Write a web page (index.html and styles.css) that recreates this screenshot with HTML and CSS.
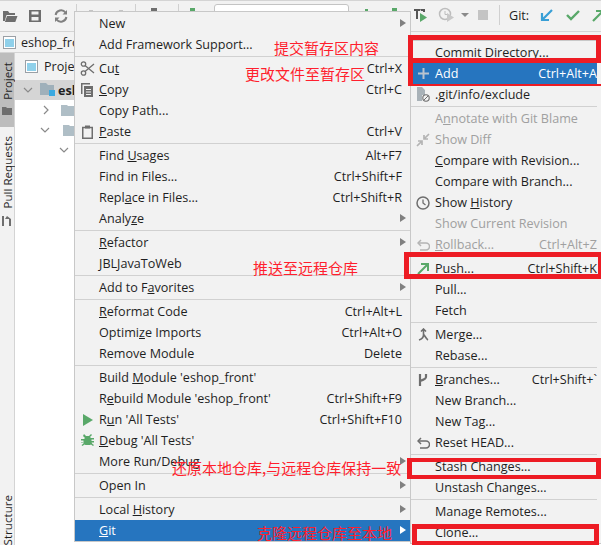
FILE: index.html
```html
<!DOCTYPE html>
<html lang="en">
<head>
<meta charset="utf-8">
<title>Git context menu</title>
<link rel="stylesheet" href="styles.css">
</head>
<body>
<div class="app">
  <div class="toolbar">
    <svg class="tb-icon" width="16" height="16" viewBox="0 0 16 16"><path d="M1 3h5l1.500 2H13v2H4.500L2.800 13H1zM5 8h10.500l-2.200 6H2.900z" fill="#6e6e6e"/></svg>
    <svg class="tb-icon" width="14" height="14" viewBox="0 0 14 14"><path d="M1 1h12v12H1z M3.500 2.500v3h7v-3z M3.500 8v3.500h7V8z" fill="#6e6e6e" fill-rule="evenodd"/></svg>
    <svg class="tb-icon tb-refresh" width="14" height="14" viewBox="0 0 14 14"><path d="M11.500 3.500A5.600 5.600 0 0 0 1.600 6M2.500 10.500A5.600 5.600 0 0 0 12.400 8" fill="none" stroke="#808080" stroke-width="2"/><path d="M8.500 5.500H13V1zM5.500 8.500H1V13z" fill="#808080"/></svg>
    <span class="tb-sep tb-sep-a"></span>
    <span class="tb-sep tb-sep-b"></span>
    <span class="tb-sep tb-sep-c"></span>
    <span class="tb-dot tb-dot-a"></span>
    <span class="tb-dot tb-dot-b"></span>
    <span class="tb-dot tb-dot-c"></span>
    <span class="tb-dot tb-dot-d"></span>
    <span class="tb-dot tb-dot-e"></span>
    <span class="tb-dot tb-dot-f"></span>
    <span class="tb-combo"></span>
  </div>
  <div class="crumb">
    <svg width="13" height="13" viewBox="0 0 13 13"><rect x=".5" y=".5" width="12" height="12" fill="#fff" stroke="#9aa0a6"/><rect x="2" y="3" width="9" height="8" fill="#8fd0ea"/></svg>
    <span>eshop_front</span>
  </div>
  <div class="workspace">
    <div class="strip">
      <div class="strip-active">
        <span class="vtext">Project</span>
        <svg class="strip-folder" width="10" height="8" viewBox="0 0 10 8"><path d="M0 0h4l1 1h5v7H0z" fill="#6e6e6e"/></svg>
      </div>
      <span class="vtext vtext-pr">Pull Requests</span>
      <svg class="strip-pr" width="10" height="10" viewBox="0 0 10 10"><path d="M0 0h2v10H0zM7 3v7h2V3zM5 0 3 3h6z" fill="#6e6e6e"/></svg>
      <span class="strip-fill"></span>
      <span class="vtext vtext-st">Structure</span>
    </div>
    <div class="pane">
      <div class="pane-head">
        <svg width="13" height="13" viewBox="0 0 13 13"><rect x=".5" y=".5" width="12" height="12" fill="#fff" stroke="#9aa0a6"/><rect x="2" y="3" width="9" height="8" fill="#8fd0ea"/></svg>
        <span>Project</span>
      </div>
      <div class="tree-row tree-sel">
        <svg class="chev" width="10" height="6" viewBox="0 0 10 6"><path d="M1 1l4 4 4-4" fill="none" stroke="#8a8a8a" stroke-width="1.200"/></svg>
        <svg class="mod" width="16" height="14" viewBox="0 0 16 14"><path d="M0 0h6l2 2h6v10H0z" fill="#9fb0ba"/><rect x="9" y="7" width="6" height="6" fill="#3aa9e0"/></svg>
        <b>eshop_front</b>
      </div>
      <div class="tree-row tree-l2">
        <svg width="6" height="10" viewBox="0 0 6 10"><path d="M1 1l4 4-4 4" fill="none" stroke="#8a8a8a" stroke-width="1.200"/></svg>
        <svg class="fold" width="14" height="11" viewBox="0 0 14 11"><path d="M0 0h6l1 1h7v10H0z" fill="#afbec6"/></svg>
      </div>
      <div class="tree-row tree-l2b">
        <svg width="10" height="6" viewBox="0 0 10 6"><path d="M1 1l4 4 4-4" fill="none" stroke="#8a8a8a" stroke-width="1.200"/></svg>
        <svg class="fold" width="14" height="11" viewBox="0 0 14 11"><path d="M0 0h6l1 1h7v10H0z" fill="#afbec6"/></svg>
      </div>
      <div class="tree-row tree-l3">
        <svg width="10" height="6" viewBox="0 0 10 6"><path d="M1 1l4 4 4-4" fill="none" stroke="#8a8a8a" stroke-width="1.200"/></svg>
      </div>
    </div>
  </div>

  <div class="top-right">
    <svg width="15" height="14" viewBox="0 0 15 14"><path d="M1 1h6v2H5v8H3V3H1zM7 1h5v3h-2V3H8z" fill="#555"/><path d="M7 5l7 4.500L7 14z" fill="#59a869"/></svg>
    <svg class="tr-clock" width="18" height="16" viewBox="0 0 18 16"><circle cx="7" cy="7" r="5.500" fill="none" stroke="#bdbdbd" stroke-width="1.500"/><path d="M7 4v3.500h3" fill="none" stroke="#bdbdbd"/><path d="M9 6l7 4.500L9 15z" fill="#c8c8c8"/></svg>
    <svg class="tr-drop" width="8" height="4" viewBox="0 0 8 4"><path d="M0 0h8L4 4z" fill="#8a8a8a"/></svg>
    <span class="tr-stop"></span>
    <span class="tr-sep"></span>
    <span class="tr-git">Git:</span>
    <svg class="tr-a" width="13" height="13" viewBox="0 0 13 13"><path d="M12 1 2.500 10.500M2 4v7h7" fill="none" stroke="#389fd6" stroke-width="2.200"/></svg>
    <svg class="tr-b" width="14" height="11" viewBox="0 0 14 11"><path d="M1 5l4 4 8-8" fill="none" stroke="#59a869" stroke-width="2.400"/></svg>
    <svg class="tr-c" width="13" height="13" viewBox="0 0 13 13"><path d="M1 12 10.500 2.500M4 2h7v7" fill="none" stroke="#59a869" stroke-width="2.200"/></svg>
  </div>

  <div class="menu menu-main">
    <div class="row"><span class="ic"></span><span class="lb">New</span><i class="arrow"></i></div>
    <div class="row"><span class="ic"></span><span class="lb">Add Framework Support...</span></div>
    <div class="sep"></div>
    <div class="row"><span class="ic"><svg width="15" height="15" viewBox="0 0 15 15"><circle cx="3.500" cy="3" r="2.200" fill="none" stroke="#6e6e6e" stroke-width="1.300"/><circle cx="3.500" cy="12" r="2.200" fill="none" stroke="#6e6e6e" stroke-width="1.300"/><path d="M5 4.500 14 12M5 10.500 14 3" stroke="#6e6e6e" stroke-width="1.300"/></svg></span><span class="lb">Cu<u>t</u></span><span class="sc">Ctrl+X</span></div>
    <div class="row"><span class="ic"><svg width="13" height="14" viewBox="0 0 13 14"><path d="M0 0h9v1.500H1.500V11H0z" fill="#6e6e6e"/><path d="M3 3h9v11H3z" fill="#6e6e6e"/><path d="M5 6h5v1H5zM5 8.500h5v1H5zM5 11h5v1H5z" fill="#f2f2f2"/></svg></span><span class="lb"><u>C</u>opy</span><span class="sc">Ctrl+C</span></div>
    <div class="row"><span class="ic"></span><span class="lb">Copy Path...</span></div>
    <div class="row"><span class="ic"><svg width="11" height="14" viewBox="0 0 11 14"><path d="M.75 2.500h9.500v10.750H.75z" fill="none" stroke="#6e6e6e" stroke-width="1.500"/><path d="M3 .5h5v3H3z" fill="#6e6e6e"/></svg></span><span class="lb"><u>P</u>aste</span><span class="sc">Ctrl+V</span></div>
    <div class="sep"></div>
    <div class="row"><span class="ic"></span><span class="lb">Find <u>U</u>sages</span><span class="sc">Alt+F7</span></div>
    <div class="row"><span class="ic"></span><span class="lb">Find in Files...</span><span class="sc">Ctrl+Shift+F</span></div>
    <div class="row"><span class="ic"></span><span class="lb">Repl<u>a</u>ce in Files...</span><span class="sc">Ctrl+Shift+R</span></div>
    <div class="row"><span class="ic"></span><span class="lb">Analy<u>z</u>e</span><i class="arrow"></i></div>
    <div class="sep"></div>
    <div class="row"><span class="ic"></span><span class="lb"><u>R</u>efactor</span><i class="arrow"></i></div>
    <div class="row"><span class="ic"></span><span class="lb">JBLJavaToWeb</span></div>
    <div class="sep"></div>
    <div class="row"><span class="ic"></span><span class="lb">Add to F<u>a</u>vorites</span><i class="arrow"></i></div>
    <div class="sep"></div>
    <div class="row"><span class="ic"></span><span class="lb"><u>R</u>eformat Code</span><span class="sc">Ctrl+Alt+L</span></div>
    <div class="row"><span class="ic"></span><span class="lb">Optimi<u>z</u>e Imports</span><span class="sc">Ctrl+Alt+O</span></div>
    <div class="row"><span class="ic"></span><span class="lb">Remove Module</span><span class="sc">Delete</span></div>
    <div class="sep"></div>
    <div class="row"><span class="ic"></span><span class="lb">Build <u>M</u>odule 'eshop_front'</span></div>
    <div class="row"><span class="ic"></span><span class="lb">R<u>e</u>build Module 'eshop_front'</span><span class="sc">Ctrl+Shift+F9</span></div>
    <div class="row"><span class="ic"><svg width="11" height="12" viewBox="0 0 11 12"><path d="M1 0l10 6-10 6z" fill="#59a869"/></svg></span><span class="lb">R<u>u</u>n 'All Tests'</span><span class="sc">Ctrl+Shift+F10</span></div>
    <div class="row"><span class="ic"><svg width="13" height="13" viewBox="0 0 13 13"><path d="M3 0l2 2h3l2-2 1 1-2 2 1 1h3v1.500h-2.500v1.500H13v1.500h-2.500l1 1.500 1.500 1-1 1-2-1.500-1 .5H4.500l-1-.5-2 1.500-1-1 1.500-1 1-1.500H0V8h2.500V6.500H0V5h3l1-1-2-2z" fill="#59a869"/></svg></span><span class="lb"><u>D</u>ebug 'All Tests'</span></div>
    <div class="row"><span class="ic"></span><span class="lb">More Run/Debug</span><i class="arrow"></i></div>
    <div class="sep"></div>
    <div class="row"><span class="ic"></span><span class="lb">Open In</span><i class="arrow"></i></div>
    <div class="sep"></div>
    <div class="row"><span class="ic"></span><span class="lb">Local <u>H</u>istory</span><i class="arrow"></i></div>
    <div class="row row-on"><span class="ic"></span><span class="lb"><u>G</u>it</span><i class="arrow"></i></div>
  </div>

  <div class="menu menu-git">
    <div class="row"><span class="ic"></span><span class="lb">Commit Directory...</span></div>
    <div class="row row-on"><span class="ic"><svg width="11" height="11" viewBox="0 0 11 11"><path d="M4.500 0h2v4.500H11v2H6.500V11h-2V6.500H0v-2h4.500z" fill="#b9c4cf"/></svg></span><span class="lb">Add</span><span class="sc">Ctrl+Alt+A</span></div>
    <div class="row"><span class="ic"><svg width="14" height="15" viewBox="0 0 14 15"><path d="M1 0h5l3 3v5H6v6H1z" fill="#a9b2b8"/><circle cx="10" cy="11" r="3.200" fill="none" stroke="#6e6e6e" stroke-width="1.100"/><path d="M8 13l4-4" stroke="#6e6e6e"/></svg></span><span class="lb">.git/info/exclude</span></div>
    <div class="sep"></div>
    <div class="row row-off"><span class="ic"></span><span class="lb">A<u>n</u>notate with Git Blame</span></div>
    <div class="row row-off"><span class="ic"><svg width="14" height="14" viewBox="0 0 14 14"><path d="M13 1 8 6M8 2v4h4M1 13l5-5M6 12V8H2" fill="none" stroke="#b4b4b4" stroke-width="1.700"/></svg></span><span class="lb">Show Diff</span></div>
    <div class="row"><span class="ic"></span><span class="lb"><u>C</u>ompare with Revision...</span></div>
    <div class="row"><span class="ic"></span><span class="lb">Compare with Branch...</span></div>
    <div class="row"><span class="ic"><svg width="14" height="14" viewBox="0 0 14 14"><circle cx="7" cy="7" r="6" fill="none" stroke="#6e6e6e" stroke-width="1.500"/><path d="M7 3.500V7l2.500 2" fill="none" stroke="#6e6e6e" stroke-width="1.300"/></svg></span><span class="lb">Show <u>H</u>istory</span></div>
    <div class="row row-off"><span class="ic"></span><span class="lb">Show Current Revision</span></div>
    <div class="row row-off"><span class="ic"><svg width="13" height="12" viewBox="0 0 13 12"><path d="M4 1 1 4l3 3" fill="none" stroke="#b4b4b4" stroke-width="1.500"/><path d="M1.500 4H9a3.200 3.200 0 0 1 0 7H3" fill="none" stroke="#b4b4b4" stroke-width="1.500"/></svg></span><span class="lb"><u>R</u>ollback...</span><span class="sc">Ctrl+Alt+Z</span></div>
    <div class="sep"></div>
    <div class="row"><span class="ic"><svg width="13" height="13" viewBox="0 0 13 13"><path d="M1 12 10.500 2.500M4 2h7v7" fill="none" stroke="#59a869" stroke-width="2"/></svg></span><span class="lb">Push...</span><span class="sc">Ctrl+Shift+K</span></div>
    <div class="row"><span class="ic"></span><span class="lb">Pull...</span></div>
    <div class="row"><span class="ic"></span><span class="lb">Fetch</span></div>
    <div class="sep"></div>
    <div class="row"><span class="ic"><svg width="11" height="13" viewBox="0 0 11 13"><path d="M5.500 1v6M1 12c3-1 4.500-3 4.500-5S8 11 10 12M3 3.500 5.500 1 8 3.500" fill="none" stroke="#6e6e6e" stroke-width="1.600"/></svg></span><span class="lb">Merge...</span></div>
    <div class="row"><span class="ic"></span><span class="lb">Rebase...</span></div>
    <div class="sep"></div>
    <div class="row"><span class="ic"><svg width="10" height="14" viewBox="0 0 10 14"><path d="M2 1v12M8 1v3c0 2-3 3-6 4" fill="none" stroke="#6e6e6e" stroke-width="2.200"/></svg></span><span class="lb"><u>B</u>ranches...</span><span class="sc">Ctrl+Shift+`</span></div>
    <div class="row"><span class="ic"></span><span class="lb">New Branch...</span></div>
    <div class="row"><span class="ic"></span><span class="lb">New Tag...</span></div>
    <div class="row"><span class="ic"><svg width="13" height="12" viewBox="0 0 13 12"><path d="M4 1 1 4l3 3" fill="none" stroke="#6e6e6e" stroke-width="1.500"/><path d="M1.500 4H9a3.200 3.200 0 0 1 0 7H3" fill="none" stroke="#6e6e6e" stroke-width="1.500"/></svg></span><span class="lb">Reset HEAD...</span></div>
    <div class="sep"></div>
    <div class="row"><span class="ic"></span><span class="lb">Stash Changes...</span></div>
    <div class="row"><span class="ic"></span><span class="lb">Unstash Changes...</span></div>
    <div class="sep"></div>
    <div class="row"><span class="ic"></span><span class="lb">Manage Remotes...</span></div>
    <div class="row"><span class="ic"></span><span class="lb">Clone...</span></div>
  </div>

  <span class="note note-commit">提交暂存区内容</span>
  <span class="note note-add">更改文件至暂存区</span>
  <span class="note note-push">推送至远程仓库</span>
  <span class="note note-reset">还原本地仓库,与远程仓库保持一致</span>
  <span class="note note-clone">克隆远程仓库至本地</span>

  <div class="mark mark-commit"></div>
  <div class="mark mark-add"></div>
  <div class="mark mark-push"></div>
  <div class="mark mark-stash"></div>
  <div class="mark mark-clone"></div>
</div>
</body>
</html>
```

FILE: styles.css
```css
html, body {
  margin: 0;
  padding: 0;
  background: #f2f2f2;
}
.app {
  position: relative;
  width: 601px;
  height: 545px;
  overflow: hidden;
  background: #f2f2f2;
  color: #1f1f1f;
  font-family: "Open Sans", "Noto Sans", sans-serif;
  font-size: 12.6px;
}
.toolbar {
  position: relative;
  display: flex;
  align-items: center;
  gap: 10px;
  height: 32px;
  padding: 0 0 1px 2px;
  box-sizing: border-box;
  border-top: 1px solid #d4d4d4;
  border-bottom: 1px solid #d4d4d4;
}
.tb-refresh { margin-left: 2px; }
.tb-sep {
  position: absolute;
  top: 3px;
  width: 1px;
  height: 20px;
  background: #d0d0d0;
}
.tb-sep-a { left: 76px; }
.tb-sep-b { left: 135px; }
.tb-sep-c { left: 178px; }
.tb-dot {
  position: absolute;
  top: 9px;
  width: 4px;
  height: 2px;
  background: #c4c4c4;
}
.tb-dot-a { left: 89px; }
.tb-dot-b { left: 119px; }
.tb-dot-c { left: 151px; top: 7px; width: 6px; height: 4px; background: #6e6e6e; }
.tb-dot-d { left: 190px; top: 7px; width: 5px; height: 4px; background: #59a869; }
.tb-dot-e { left: 365px; top: 8px; width: 3px; height: 3px; background: #59a869; }
.tb-dot-f { left: 392px; top: 7px; width: 5px; height: 4px; background: #59a869; }
.tb-combo {
  position: absolute;
  left: 214px;
  top: 3px;
  width: 135px;
  height: 24px;
  box-sizing: border-box;
  background: #fff;
  border: 1px solid #c4c4c4;
  border-radius: 3px;
}
.crumb {
  display: flex;
  align-items: center;
  gap: 5px;
  height: 20px;
  padding-left: 3px;
  border-bottom: 1px solid #d4d4d4;
}
.workspace {
  display: flex;
  height: 492px;
}
.strip {
  display: flex;
  flex-direction: column;
  align-items: center;
  width: 14px;
  border-right: 1px solid #d4d4d4;
}
.strip-active {
  display: flex;
  flex-direction: column;
  align-items: center;
  width: 100%;
  height: 74px;
  background: #bdbdbd;
  padding-top: 9px;
  box-sizing: border-box;
}
.vtext {
  writing-mode: vertical-rl;
  transform: rotate(180deg);
  font-size: 11.6px;
  line-height: 13px;
}
.strip-folder { margin-top: 7px; }
.vtext-pr { margin-top: 9px; }
.strip-pr { margin-top: 7px; }
.strip-fill { flex: 1; }
.vtext-st { margin-bottom: 0; }
.pane {
  flex: 1;
  background: #fff;
}
.pane-head {
  display: flex;
  align-items: center;
  gap: 6px;
  height: 27px;
  padding-left: 10px;
  background: #f2f2f2;
}
.tree-row {
  display: flex;
  align-items: center;
  height: 20px;
}
.tree-sel {
  background: #d5d5d5;
  padding-left: 8px;
  gap: 7px;
}
.mod { margin-right: -5px; }
.tree-l2 { padding-left: 28px; gap: 12px; }
.tree-l2b { padding-left: 25px; gap: 13px; }
.tree-l3 { padding-left: 44px; }
.top-right {
  position: absolute;
  left: 413px;
  top: 6px;
  display: flex;
  align-items: center;
  height: 18px;
}
.tr-clock { margin-left: 10px; }
.tr-drop { margin-left: 5px; }
.tr-stop {
  width: 10px;
  height: 10px;
  margin-left: 9px;
  background: #c4c4c4;
}
.tr-sep {
  width: 1px;
  height: 20px;
  margin-left: 11px;
  background: #d0d0d0;
}
.tr-git { margin-left: 9px; }
.tr-a { margin-left: 11px; }
.tr-b { margin-left: 13px; }
.tr-c { margin-left: 12px; }
.menu {
  position: absolute;
  box-sizing: border-box;
  background: #f2f2f2;
  border: 1px solid #c8c8c8;
  padding-top: 1px;
}
.menu-main {
  left: 74px;
  top: 11px;
  width: 337px;
}
.menu-git {
  left: 410px;
  top: 40px;
  width: 193px;
  padding-right: 5px;
}
.row {
  position: relative;
  display: flex;
  align-items: center;
  height: 21px;
  padding-right: 8px;
  white-space: nowrap;
}
.menu-git .row { padding-right: 0; }
.ic {
  display: flex;
  align-items: center;
  justify-content: center;
  flex: none;
  width: 24px;
}
.lb { flex: 1; }
.row-on {
  background: #2675bf;
  color: #fff;
}
.row-off { color: #a0a0a0; }
.sep {
  height: 1px;
  margin: 1px 0;
  background: #d1d1d1;
}
.arrow {
  position: absolute;
  right: 4px;
  top: 6px;
  width: 0;
  height: 0;
  border-left: 6px solid #808080;
  border-top: 4.500px solid transparent;
  border-bottom: 4.500px solid transparent;
}
.row-on .arrow { border-left-color: #fff; }
.note {
  position: absolute;
  color: #ff1f2e;
  font-family: "Noto Sans CJK SC", sans-serif;
  font-size: 15px;
  line-height: 20px;
  white-space: nowrap;
}
.note-commit { left: 274px; top: 38px; }
.note-add { left: 245px; top: 64px; }
.note-push { left: 253px; top: 258px; }
.note-reset { left: 172px; top: 458px; }
.note-clone { left: 257px; top: 523px; }
.mark {
  position: absolute;
  box-sizing: border-box;
  border: 5px solid #ed1c24;
}
.mark-commit { left: 408px; top: 35px; width: 193px; height: 28px; }
.mark-add { left: 408px; top: 63px; width: 193px; height: 23px; border-width: 0 0 2px 5px; }
.mark-push { left: 404px; top: 252px; width: 197px; height: 27px; border-right-width: 3px; }
.mark-stash { left: 407px; top: 458px; width: 194px; height: 21px; border-width: 4px 5px; }
.mark-clone { left: 412px; top: 524px; width: 187px; height: 21px; border-bottom-width: 4px; }
```
